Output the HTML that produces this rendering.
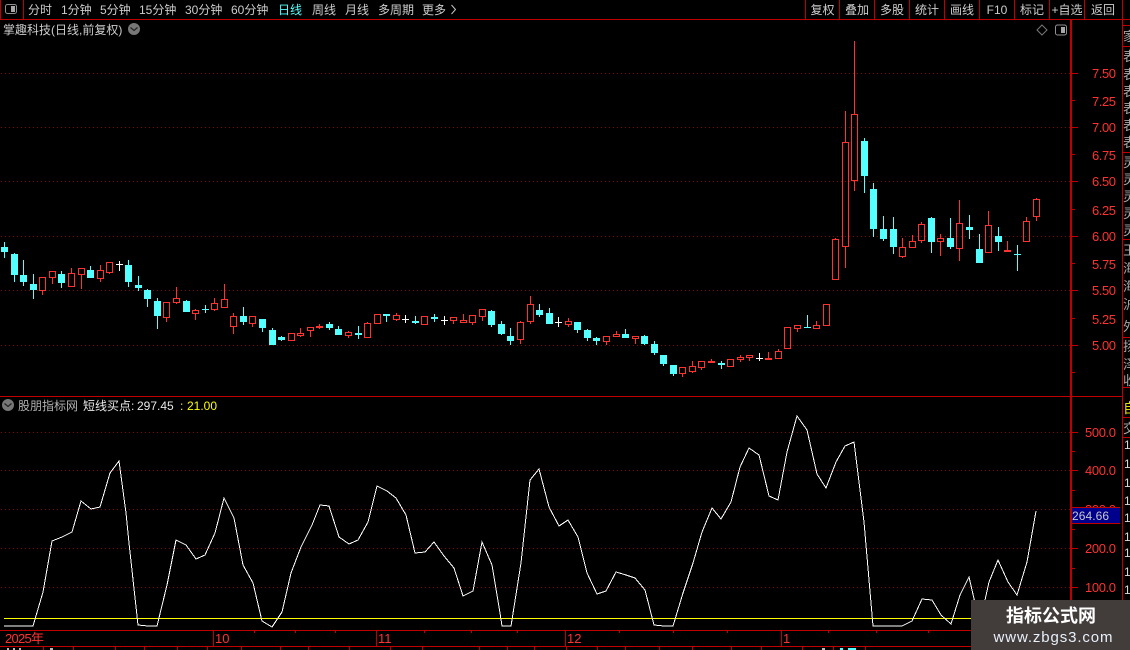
<!DOCTYPE html>
<html lang="zh"><head><meta charset="utf-8"><title>掌趣科技</title>
<style>
html,body{margin:0;padding:0;background:#000;width:1130px;height:650px;overflow:hidden}
svg{display:block;position:absolute;left:0;top:0}
text{font-family:"Liberation Sans","WenQuanYi Zen Hei","Noto Sans CJK SC",sans-serif;font-size:12px}
.t{fill:#cccccc}
.p{fill:#ff3232;font-size:13px}
.s{fill:#a8a8a8;font-size:13px}
</style></head><body>
<svg width="1130" height="650" viewBox="0 0 1130 650" xmlns="http://www.w3.org/2000/svg">
<rect width="1130" height="650" fill="#000"/>
<!-- grid -->
<path shape-rendering="crispEdges" stroke="#8c0000" stroke-dasharray="1 3" fill="none" d="M1 73.5H1070M1 127.5H1070M1 181.5H1070M1 236.5H1070M1 290.5H1070M1 345.5H1070M1 432.5H1070M1 470.5H1070M1 509.5H1070M1 548.5H1070M1 587.5H1070"/>
<!-- frame -->
<path shape-rendering="crispEdges" stroke="#c00000" fill="none" d="M0 19.5H1130M0.5 0V19M23.5 0V19M805.5 0V19M839.5 0V19M874.5 0V19M909.5 0V19M944.5 0V19M979.5 0V19M1014.5 0V19M1049.5 0V19M1084.5 0V19M1122.5 0V650M1122 25.5H1130M1122 46.5H1130M1122 152.5H1130M1122 239.5H1130M1122 337.5H1130M1122 387.5H1130M1122 417.5H1130M1122 437.5H1130M0 396.5H1122M0 630.5H1071M0 646.5H1071"/>
<path shape-rendering="crispEdges" stroke="#c00000" stroke-width="2" fill="none" d="M1071 20V650"/>
<!-- axis ticks -->
<path shape-rendering="crispEdges" stroke="#c00000" fill="none" d="M1072 73.5h6M1072 100.5h3M1072 127.5h6M1072 154.5h3M1072 181.5h6M1072 209.5h3M1072 236.5h6M1072 263.5h3M1072 290.5h6M1072 318.5h3M1072 345.5h6M1072 372.5h3M1072 432.5h6M1072 451.5h3M1072 470.5h6M1072 490.5h3M1072 509.5h6M1072 529.5h3M1072 548.5h6M1072 568.5h3M1072 587.5h6M1072 607.5h3M213.5 630V646M376.5 630V646M565.5 630V646M781.5 630V646M254.5 630v3M295.5 630v3M335.5 630v3M424.5 630v3M471.5 630v3M517.5 630v3M619.5 630v3M673.5 630v3M727.5 630v3M828.5 630v3M876.5 630v3M928.5 630v3M43.5 646v4M73.5 646v4M115.5 646v4M144.5 646v4M177.5 646v4M207.5 646v4M241.5 646v4M280.5 646v4M308.5 646v4M349.5 646v4M390.5 646v4M422.5 646v4M479.5 646v4M507.5 646v4M534.5 646v4M566.5 646v4M597.5 646v4M625.5 646v4M659.5 646v4M692.5 646v4M731.5 646v4M761.5 646v4M802.5 646v4M833.5 646v4M865.5 646v4"/>
<!-- cyan candles -->
<path shape-rendering="crispEdges" fill="#54ffff" d="M1 247h7V252h-7zM11 254h7V275h-7zM20 275h7V282h-7zM30 284h7V290h-7zM58 274h7V283h-7zM87 270h7V278h-7zM125 265h7V282h-7zM135 285h7V288h-7zM144 290h7V299h-7zM154 301h7V316h-7zM183 301h7V312h-7zM240 316h7V322h-7zM259 319h7V328h-7zM269 330h7V345h-7zM278 337h7V340h-7zM326 324h7V328h-7zM335 329h7V335h-7zM355 333h7V335h-7zM383 314h7V316h-7zM412 321h7V323h-7zM431 317h7V319h-7zM488 311h7V325h-7zM498 324h7V334h-7zM507 336h7V341h-7zM536 310h7V315h-7zM546 313h7V324h-7zM574 322h7V330h-7zM584 330h7V338h-7zM593 338h7V341h-7zM622 334h7V338h-7zM641 336h7V344h-7zM651 344h7V353h-7zM660 355h7V364h-7zM670 365h7V374h-7zM718 363h7V365h-7zM861 141h7V176h-7zM870 189h7V229h-7zM880 229h7V239h-7zM890 229h7V247h-7zM928 218h7V242h-7zM947 238h7V247h-7zM966 227h7V230h-7zM976 249h7V263h-7zM995 236h7V242h-7z"/>
<path shape-rendering="crispEdges" fill="none" stroke="#54ffff" d="M4.5 242V258M14.5 253V282M23.5 260V286M33.5 274V299M61.5 271V288M90.5 266V278M128.5 260V287M138.5 276V291M147.5 289V307M157.5 298V329M186.5 300V312M243.5 307V325M262.5 319V332M272.5 328V345M281.5 336V341M329.5 322V330M338.5 326V335M358.5 326V339M386.5 314V322M415.5 316V324M434.5 314V322M491.5 310V327M501.5 321V335M510.5 328V345M539.5 304V317M549.5 308V324M577.5 322V333M587.5 329V341M596.5 337V345M625.5 329V338M644.5 335V345M654.5 341V355M663.5 355V366M673.5 365V376M721.5 361V369M864.5 138V193M873.5 183V237M883.5 216V241M893.5 217V254M931.5 217V253M950.5 218V249M969.5 215V239M979.5 234V263M998.5 227V251M205.5 305V313M807.5 315V328M1017.5 245V271M202 309.5h7M804 327.5h7M1014 254.5h7"/>
<!-- white crosses -->
<path shape-rendering="crispEdges" fill="none" stroke="#fff" d="M119.5 261V271M116 264.5h7M405.5 315V323M402 319.5h7M444.5 316V325M441 320.5h7M558.5 317V327M555 322.5h7M759.5 353V361M756 358.5h7"/>
<!-- red candle bodies -->
<path shape-rendering="crispEdges" fill="none" stroke="#ff3232" d="M39.5 277.5h6V290.5h-6zM49.5 271.5h6V277.5h-6zM68.5 273.5h6V286.5h-6zM78.5 268.5h6V274.5h-6zM97.5 270.5h6V278.5h-6zM106.5 262.5h6V272.5h-6zM163.5 302.5h6V317.5h-6zM173.5 298.5h6V302.5h-6zM192.5 310.5h6V313.5h-6zM211.5 303.5h6V309.5h-6zM221.5 299.5h6V307.5h-6zM230.5 316.5h6V326.5h-6zM249.5 316.5h6V323.5h-6zM288.5 333.5h6V340.5h-6zM297.5 333.5h6V335.5h-6zM307.5 327.5h6V330.5h-6zM345.5 332.5h6V335.5h-6zM364.5 323.5h6V337.5h-6zM374.5 314.5h6V323.5h-6zM393.5 315.5h6V319.5h-6zM421.5 316.5h6V324.5h-6zM450.5 317.5h6V320.5h-6zM460.5 320.5h6V322.5h-6zM469.5 315.5h6V322.5h-6zM479.5 309.5h6V316.5h-6zM517.5 322.5h6V339.5h-6zM527.5 304.5h6V321.5h-6zM565.5 321.5h6V324.5h-6zM603.5 336.5h6V341.5h-6zM613.5 334.5h6V336.5h-6zM632.5 336.5h6V338.5h-6zM679.5 367.5h6V373.5h-6zM689.5 366.5h6V371.5h-6zM698.5 361.5h6V367.5h-6zM727.5 359.5h6V366.5h-6zM737.5 357.5h6V359.5h-6zM746.5 355.5h6V357.5h-6zM775.5 351.5h6V358.5h-6zM784.5 327.5h6V348.5h-6zM794.5 325.5h6V328.5h-6zM813.5 325.5h6V328.5h-6zM823.5 304.5h6V325.5h-6zM832.5 239.5h6V279.5h-6zM842.5 142.5h6V246.5h-6zM851.5 114.5h6V180.5h-6zM899.5 247.5h6V256.5h-6zM909.5 241.5h6V247.5h-6zM918.5 224.5h6V240.5h-6zM937.5 238.5h6V241.5h-6zM956.5 223.5h6V248.5h-6zM985.5 225.5h6V252.5h-6zM1023.5 221.5h6V241.5h-6zM1033.5 199.5h6V216.5h-6z"/>
<path shape-rendering="crispEdges" fill="#ff3232" d="M316 326h7V328h-7zM708 361h7V363h-7zM765 358h7V360h-7zM1004 250h7V252h-7z"/>
<path shape-rendering="crispEdges" fill="none" stroke="#ff3232" d="M42.5 291V295M52.5 278V284M71.5 268V273M81.5 275V289M100.5 265V270M100.5 279V282M109.5 273V274M166.5 318V322M176.5 287V298M176.5 303V304M195.5 309V310M195.5 314V320M214.5 298V303M214.5 310V311M224.5 284V299M233.5 313V316M233.5 327V334M252.5 324V327M300.5 328V333M300.5 336V337M310.5 331V337M319.5 324V329M348.5 331V332M348.5 336V338M367.5 322V323M396.5 313V315M396.5 320V321M453.5 321V324M463.5 314V320M472.5 323V325M482.5 317V321M520.5 321V322M520.5 340V344M530.5 296V304M530.5 322V324M568.5 318V321M568.5 325V327M606.5 342V345M616.5 331V334M635.5 339V344M682.5 374V377M692.5 361V366M692.5 372V373M701.5 368V370M711.5 359V361M740.5 355V357M740.5 360V362M749.5 358V361M768.5 352V358M778.5 349V351M797.5 329V332M816.5 321V325M835.5 238V239M845.5 111V142M845.5 247V268M854.5 41V114M854.5 181V191M902.5 238V247M902.5 257V258M912.5 235V241M921.5 222V224M921.5 241V243M940.5 234V238M940.5 242V256M959.5 200V223M959.5 249V261M988.5 211V225M1007.5 241V250M1026.5 217V221M1036.5 198V199M1036.5 217V221"/>
<!-- indicator lines -->
<path shape-rendering="crispEdges" fill="none" stroke="#ffff00" d="M4 618.5H971"/>
<polyline shape-rendering="crispEdges" fill="none" stroke="#fff" points="4,626 33,626 43,592 52,541 62,537 72,532 81,501 91,509 100,507 110,473 119,461 126,513 129,543 138,625 148,626 157,626 167,585 176,540 186,545 196,559 205,555 215,533 224,498 234,518 243,565 253,583 262,621 272,627 282,612 291,573 301,547 312,525 320,505 329,506 339,537 349,544 358,540 368,522 377,486 387,491 396,498 406,515 415,553 425,552 434,542 444,556 454,568 463,596 473,591 482,542 492,565 500,613 502,626 511,626 521,563 530,480 539,469 549,507 559,526 568,520 578,537 587,573 597,594 606,591 616,572 626,575 635,578 645,590 654,625 664,626 673,626 683,593 693,563 702,532 712,508 721,519 731,502 740,467 749,448 759,455 769,496 778,500 787,452 797,416 807,430 817,474 826,488 836,462 845,446 854,442 864,522 873,626 902,626 912,621 922,599 932,600 941,615 951,624 960,595 969,577 975,603 979,620 985,600 989,582 998,560 1008,582 1017,595 1027,562 1036,511"/>
<!-- toolbar left -->
<rect x="5.5" y="4.5" width="11" height="9" rx="2" fill="none" stroke="#909090"/>
<rect x="11" y="6" width="4" height="6" fill="#a8a8a8"/>
<text class="t" x="28" y="14">分时</text>
<text class="t" x="61" y="14">1分钟</text>
<text class="t" x="100" y="14">5分钟</text>
<text class="t" x="139" y="14">15分钟</text>
<text class="t" x="185" y="14">30分钟</text>
<text class="t" x="231" y="14">60分钟</text>
<text x="278" y="14" fill="#54ffff">日线</text>
<text class="t" x="312" y="14">周线</text>
<text class="t" x="345" y="14">月线</text>
<text class="t" x="378" y="14">多周期</text>
<text class="t" x="422" y="14">更多</text>
<path d="M451.5 5l4 4.5-4 4.5" fill="none" stroke="#c4c4c4"/>
<!-- toolbar right -->
<g text-anchor="middle">
<text class="t" x="822.5" y="14">复权</text>
<text class="t" x="857" y="14">叠加</text>
<text class="t" x="892" y="14">多股</text>
<text class="t" x="927" y="14">统计</text>
<text class="t" x="962" y="14">画线</text>
<text class="t" x="997" y="14">F10</text>
<text class="t" x="1032" y="14">标记</text>
<text class="t" x="1067" y="14">+自选</text>
<text class="t" x="1103" y="14">返回</text>
</g>
<!-- title -->
<text class="t" x="3" y="34">掌趣科技(日线,前复权)</text>
<circle cx="134" cy="29" r="6" fill="#777"/>
<path d="M130.5 27.5l3.5 3 3.5-3" fill="none" stroke="#222" stroke-width="1.2"/>
<path d="M1042 25l5 5-5 5-5-5z" fill="none" stroke="#777"/>
<rect x="1055.5" y="25" width="11" height="10" rx="2" fill="none" stroke="#909090"/>
<rect x="1061" y="27" width="4" height="6" fill="#a8a8a8"/>
<!-- indicator title -->
<circle cx="8" cy="405" r="6" fill="#777"/>
<path d="M4.5 403.5l3.5 3 3.5-3" fill="none" stroke="#222" stroke-width="1.2"/>
<text x="18" y="410" fill="#b0b0b0">股朋指标网</text>
<text x="83" y="410" fill="#e8e8e8">短线买点:</text>
<text x="137" y="410" fill="#e8e8e8">297.45</text>
<text x="180" y="410" fill="#ffff00">:</text>
<text x="187" y="410" fill="#ffff00">21.00</text>
<!-- price labels -->
<g>
<text class="p" x="1092" y="78" textLength="24">7.50</text>
<text class="p" x="1092" y="106" textLength="24">7.25</text>
<text class="p" x="1092" y="132" textLength="24">7.00</text>
<text class="p" x="1092" y="160" textLength="24">6.75</text>
<text class="p" x="1092" y="186" textLength="24">6.50</text>
<text class="p" x="1092" y="215" textLength="24">6.25</text>
<text class="p" x="1092" y="241" textLength="24">6.00</text>
<text class="p" x="1092" y="269" textLength="24">5.75</text>
<text class="p" x="1092" y="295" textLength="24">5.50</text>
<text class="p" x="1092" y="324" textLength="24">5.25</text>
<text class="p" x="1092" y="350" textLength="24">5.00</text>
<text class="p" x="1085" y="437" textLength="31">500.0</text>
<text class="p" x="1085" y="475" textLength="31">400.0</text>
<text class="p" x="1085" y="514" textLength="31">300.0</text>
<text class="p" x="1085" y="553" textLength="31">200.0</text>
<text class="p" x="1085" y="592" textLength="31">100.0</text>
</g>
<rect x="1072" y="507" width="48" height="16" fill="#00008c"/>
<path shape-rendering="crispEdges" stroke="#c00000" d="M1072 507.5h48M1072 523.5h48"/>
<text x="1072" y="520" fill="#c8c8c8" textLength="37">264.66</text>
<!-- time axis -->
<text class="p" x="5" y="643" textLength="39">2025年</text>
<text class="p" x="215" y="643">10</text>
<text class="p" x="378" y="643">11</text>
<text class="p" x="567" y="643">12</text>
<text class="p" x="783" y="643">1</text>
<!-- sidebar -->
<svg x="1123" y="0" width="7" height="650" viewBox="0 0 7 650">
<g>
<text class="s" x="0" y="41">家</text>
<text class="s" x="0" y="61">表</text><text class="s" x="0" y="79">表</text><text class="s" x="0" y="96">表</text><text class="s" x="0" y="113">表</text><text class="s" x="0" y="130">表</text><text class="s" x="0" y="147">表</text>
<text class="s" x="0" y="167">灵</text><text class="s" x="0" y="184">灵</text><text class="s" x="0" y="201">灵</text><text class="s" x="0" y="218">灵</text><text class="s" x="0" y="235">灵</text>
<text class="s" x="0" y="255">王</text><text class="s" x="0" y="273">海</text><text class="s" x="0" y="291">海</text><text class="s" x="0" y="309">沪</text><text class="s" x="0" y="331">外</text>
<text class="s" x="0" y="351">扬</text><text class="s" x="0" y="369">泽</text><text class="s" x="0" y="385">收</text>
<text x="0" y="413" fill="#e0e000" style="font-size:14px">自</text>
<text class="s" x="0" y="433">交</text>
</g>
<g fill="#dcdcdc">
<text x="1" y="449">1</text><text x="1" y="468">1</text><text x="1" y="487">1</text><text x="1" y="505">1</text><text x="1" y="522">1</text><text x="1" y="541">1</text><text x="1" y="557">1</text><text x="1" y="576">1</text><text x="1" y="594">1</text>
</g>
</svg>
<!-- bottom stubs -->
<path shape-rendering="crispEdges" fill="#bbb" d="M7 648h2v2H7zM13 648h2v2h-2zM19 648h2v2h-2zM50 648h3v2h-3zM822 648h3v2h-3z"/>
<path shape-rendering="crispEdges" fill="#54ffff" d="M840 648h3v2h-3zM848 648h8v2h-8z"/>
<!-- watermark -->
<rect x="971" y="600" width="159" height="50" fill="#423c3b"/>
<text x="1051" y="622" text-anchor="middle" fill="#fff" style="font-size:18px;font-weight:bold;font-family:'Noto Sans CJK SC','WenQuanYi Zen Hei',sans-serif">指标公式网</text>
<text x="1053" y="642" text-anchor="middle" fill="#e8f0fa" style="font-size:15px" textLength="119">www.zbgs3.com</text>
</svg>
</body></html>
